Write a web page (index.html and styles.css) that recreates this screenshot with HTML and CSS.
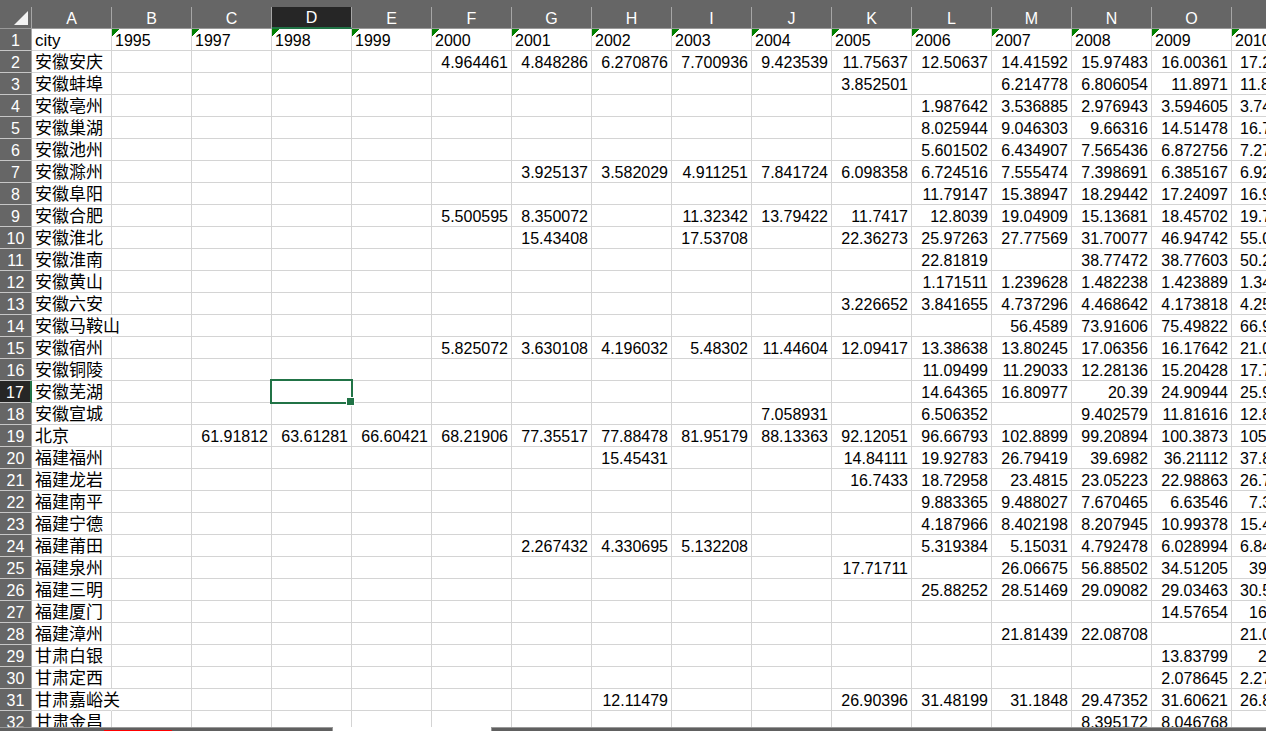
FILE: index.html
```
<!DOCTYPE html>
<html lang="zh-CN">
<head>
<meta charset="utf-8">
<title>city</title>
<link rel="stylesheet" href="styles.css">
</head>
<body>
<div class="app">
<main class="grid">
<table class="sheet">
<colgroup><col class="col-num"><col span="15" class="col-data"><col></colgroup>
<thead>
<tr><th class="corner"><svg class="corner-mark" viewBox="0 0 14 14" aria-hidden="true"><path d="M14 0V14H0Z"/></svg></th><th>A<th>B<th>C<th class="active-col">D<th>E<th>F<th>G<th>H<th>I<th>J<th>K<th>L<th>M<th>N<th>O<th></tr>
</thead>
<tbody>
<tr class="years"><th>1<td>city<td>1995<td>1997<td>1998<td>1999<td>2000<td>2001<td>2002<td>2003<td>2004<td>2005<td>2006<td>2007<td>2008<td>2009<td>2010</tr>
<tr><th>2<td>安徽安庆<td><td><td><td><td>4.964461<td>4.848286<td>6.270876<td>7.700936<td>9.423539<td>11.75637<td>12.50637<td>14.41592<td>15.97483<td>16.00361<td>17.2</tr>
<tr><th>3<td>安徽蚌埠<td><td><td><td><td><td><td><td><td><td>3.852501<td><td>6.214778<td>6.806054<td>11.8971<td>11.8</tr>
<tr><th>4<td>安徽亳州<td><td><td><td><td><td><td><td><td><td><td>1.987642<td>3.536885<td>2.976943<td>3.594605<td>3.74</tr>
<tr><th>5<td>安徽巢湖<td><td><td><td><td><td><td><td><td><td><td>8.025944<td>9.046303<td>9.66316<td>14.51478<td>16.7</tr>
<tr><th>6<td>安徽池州<td><td><td><td><td><td><td><td><td><td><td>5.601502<td>6.434907<td>7.565436<td>6.872756<td>7.27</tr>
<tr><th>7<td>安徽滁州<td><td><td><td><td><td>3.925137<td>3.582029<td>4.911251<td>7.841724<td>6.098358<td>6.724516<td>7.555474<td>7.398691<td>6.385167<td>6.92</tr>
<tr><th>8<td>安徽阜阳<td><td><td><td><td><td><td><td><td><td><td>11.79147<td>15.38947<td>18.29442<td>17.24097<td>16.9</tr>
<tr><th>9<td>安徽合肥<td><td><td><td><td>5.500595<td>8.350072<td><td>11.32342<td>13.79422<td>11.7417<td>12.8039<td>19.04909<td>15.13681<td>18.45702<td>19.7</tr>
<tr><th>10<td>安徽淮北<td><td><td><td><td><td>15.43408<td><td>17.53708<td><td>22.36273<td>25.97263<td>27.77569<td>31.70077<td>46.94742<td>55.0</tr>
<tr><th>11<td>安徽淮南<td><td><td><td><td><td><td><td><td><td><td>22.81819<td><td>38.77472<td>38.77603<td>50.2</tr>
<tr><th>12<td>安徽黄山<td><td><td><td><td><td><td><td><td><td><td>1.171511<td>1.239628<td>1.482238<td>1.423889<td>1.34</tr>
<tr><th>13<td>安徽六安<td><td><td><td><td><td><td><td><td><td>3.226652<td>3.841655<td>4.737296<td>4.468642<td>4.173818<td>4.25</tr>
<tr><th>14<td class="spill">安徽马鞍山<td><td><td><td><td><td><td><td><td><td><td><td>56.4589<td>73.91606<td>75.49822<td>66.9</tr>
<tr><th>15<td>安徽宿州<td><td><td><td><td>5.825072<td>3.630108<td>4.196032<td>5.48302<td>11.44604<td>12.09417<td>13.38638<td>13.80245<td>17.06356<td>16.17642<td>21.0</tr>
<tr><th>16<td>安徽铜陵<td><td><td><td><td><td><td><td><td><td><td>11.09499<td>11.29033<td>12.28136<td>15.20428<td>17.7</tr>
<tr><th class="active-row">17<td>安徽芜湖<td><td><td class="selected"><span class="frame"></span><td><td><td><td><td><td><td><td>14.64365<td>16.80977<td>20.39<td>24.90944<td>25.9</tr>
<tr><th>18<td>安徽宣城<td><td><td><td><td><td><td><td><td>7.058931<td><td>6.506352<td><td>9.402579<td>11.81616<td>12.8</tr>
<tr><th>19<td>北京<td><td>61.91812<td>63.61281<td>66.60421<td>68.21906<td>77.35517<td>77.88478<td>81.95179<td>88.13363<td>92.12051<td>96.66793<td>102.8899<td>99.20894<td>100.3873<td>105</tr>
<tr><th>20<td>福建福州<td><td><td><td><td><td><td>15.45431<td><td><td>14.84111<td>19.92783<td>26.79419<td>39.6982<td>36.21112<td>37.8</tr>
<tr><th>21<td>福建龙岩<td><td><td><td><td><td><td><td><td><td>16.7433<td>18.72958<td>23.4815<td>23.05223<td>22.98863<td>26.7</tr>
<tr><th>22<td>福建南平<td><td><td><td><td><td><td><td><td><td><td>9.883365<td>9.488027<td>7.670465<td>6.63546<td class="short">7.3</tr>
<tr><th>23<td>福建宁德<td><td><td><td><td><td><td><td><td><td><td>4.187966<td>8.402198<td>8.207945<td>10.99378<td>15.4</tr>
<tr><th>24<td>福建莆田<td><td><td><td><td><td>2.267432<td>4.330695<td>5.132208<td><td><td>5.319384<td>5.15031<td>4.792478<td>6.028994<td>6.84</tr>
<tr><th>25<td>福建泉州<td><td><td><td><td><td><td><td><td><td>17.71711<td><td>26.06675<td>56.88502<td>34.51205<td class="short">39</tr>
<tr><th>26<td>福建三明<td><td><td><td><td><td><td><td><td><td><td>25.88252<td>28.51469<td>29.09082<td>29.03463<td>30.5</tr>
<tr><th>27<td>福建厦门<td><td><td><td><td><td><td><td><td><td><td><td><td><td>14.57654<td class="short">16</tr>
<tr><th>28<td>福建漳州<td><td><td><td><td><td><td><td><td><td><td><td>21.81439<td>22.08708<td><td>21.0</tr>
<tr><th>29<td>甘肃白银<td><td><td><td><td><td><td><td><td><td><td><td><td><td>13.83799<td class="shorter">2</tr>
<tr><th>30<td>甘肃定西<td><td><td><td><td><td><td><td><td><td><td><td><td><td>2.078645<td>2.27</tr>
<tr><th>31<td class="spill">甘肃嘉峪关<td><td><td><td><td><td><td>12.11479<td><td><td>26.90396<td>31.48199<td>31.1848<td>29.47352<td>31.60621<td>26.8</tr>
<tr><th>32<td>甘肃金昌<td><td><td><td><td><td><td><td><td><td><td><td><td>8.395172<td>8.046768<td></tr>
</tbody>
</table>
</main>
<footer class="tabs"><div class="tabs-left"><span class="tab-red"></span></div><div class="tab-current"></div><div class="tabs-rest"></div></footer>
</div>
</body>
</html>
```
FILE: styles.css
```
* { box-sizing: border-box; }

body {
  margin: 0;
  background: #fff;
  color: #000;
  font-family: "Liberation Sans", "Noto Sans CJK SC", sans-serif;
  font-size: 16px;
}

.app {
  display: flex;
  flex-direction: column;
  height: 100vh;
  overflow: hidden;
  padding-top: 7px;
  background: #666;
}

.grid {
  flex: 1;
  min-height: 0;
  overflow: hidden;
  background: #fff;
}

.sheet {
  width: 100%;
  table-layout: fixed;
  border-collapse: separate;
  border-spacing: 0;
}

.col-num { width: 32px; }
.col-data { width: 80px; }

th, td {
  height: 22px;
  padding: 2px 3px 0;
  line-height: 19px;
  white-space: nowrap;
}

th {
  padding: 2px 0 0;
  background: #666;
  color: #fff;
  font-weight: 400;
  text-align: center;
  border-right: 1px solid #a6a6a6;
  border-bottom: 1px solid #999;
}

tbody th { border-bottom-color: #c6c6c6; }

th.corner { padding: 4px 3px 3px; }
.corner-mark {
  display: block;
  width: 14px;
  height: 14px;
  margin-left: auto;
  fill: #f2f2f2;
}

th.active-col {
  background: #262626;
  border-bottom: 2px solid #217346;
  line-height: 18px;
}
th.active-row {
  background: #262626;
  border-right: 2px solid #217346;
}

td {
  text-align: right;
  border-right: 1px solid #d4d4d4;
  border-bottom: 1px solid #d4d4d4;
}

td:nth-child(2) {
  font-size: 17px;
  text-align: left;
}
.years td { text-align: left; }
td.spill {
  overflow: visible;
  border-right-color: #fff;
}

/* corner flag on numbers stored as text */
.years td:nth-child(n + 3) {
  background: linear-gradient(135deg, #008000 5px, transparent 5px) no-repeat;
}

td:last-child {
  overflow: hidden;
  padding-left: 8px;
  padding-right: 0;
  border-right: 0;
  text-align: left;
}
.years td:last-child { padding-left: 3px; }
td.short { padding-left: 17px; }
td.shorter { padding-left: 26px; }

thead th:last-child { border-right: 0; }

.selected { position: relative; }
.frame {
  position: absolute;
  inset: -2px;
  border: 2px solid #217346;
}
.frame::after {
  content: "";
  position: absolute;
  right: -4px;
  bottom: -4px;
  width: 7px;
  height: 7px;
  background: #217346;
  border: 1px solid #fff;
}

.tabs {
  display: flex;
  height: 4px;
  background: #fff;
}
.tabs-left, .tabs-rest {
  background: #606060;
  border-top: 1px solid #999;
}
.tabs-left {
  display: flex;
  align-items: flex-end;
  width: 333px;
  padding-left: 104px;
  border-right: 1px solid #999;
}
.tab-red {
  width: 68px;
  height: 1px;
  background: #f00;
}
.tab-current { width: 158px; }
.tabs-rest {
  flex: 1;
  border-left: 1px solid #999;
}
```
